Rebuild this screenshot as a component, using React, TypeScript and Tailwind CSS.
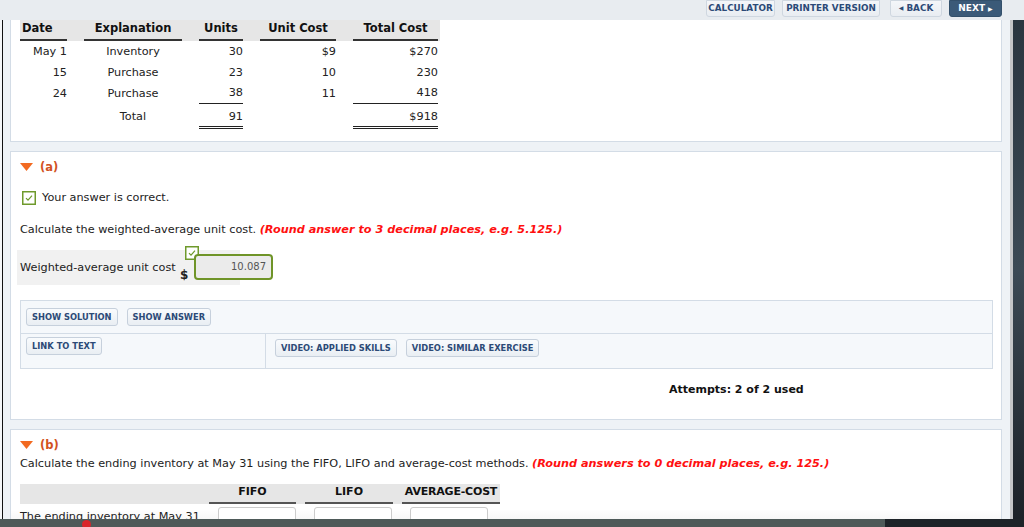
import React from "react";

const purchases = [
  { date: "May 1", explanation: "Inventory", units: "30", unitCost: "$9", totalCost: "$270" },
  { date: "15", explanation: "Purchase", units: "23", unitCost: "10", totalCost: "230" },
  { date: "24", explanation: "Purchase", units: "38", unitCost: "11", totalCost: "418" },
];

const cols = "grid grid-cols-[47px_98px_44px_76px_85px] gap-x-[17px]";
const methodCols = "grid grid-cols-[180px_87px_88px_98px] gap-x-[9px]";

const SmallButton = ({ children }: { children: React.ReactNode }) => (
  <button className="h-[18px] px-[5px] rounded-[3px] border border-[#c6d0dc] bg-gradient-to-b from-[#f9fbfd] to-[#e9eef3] text-[#2c4a77] text-[8.3px] font-bold leading-none whitespace-nowrap">
    {children}
  </button>
);

const TopButton = ({ children, dark, className = "" }: { children: React.ReactNode; dark?: boolean; className?: string }) => (
  <button
    className={
      (dark
        ? "h-[17px] rounded-b-[3px] bg-[#3b5a78] border border-[#33506b] text-white text-[9px] font-bold leading-none "
        : "h-[17px] rounded-b-[3px] bg-gradient-to-b from-[#f4f6f9] to-[#e9edf2] border border-[#cfd7e0] text-[#2c4a77] text-[8.8px] font-bold leading-none ") +
      className
    }
  >
    {children}
  </button>
);

const Triangle = () => (
  <svg width="13" height="8" viewBox="0 0 13 8">
    <polygon points="0,0 13,0 6.5,8" fill="#f26a21" />
  </svg>
);

const Check = ({ size = 14 }: { size?: number }) => (
  <svg width={size} height={size} viewBox="0 0 14 14">
    <rect x="0.75" y="0.75" width="12.5" height="12.5" fill="#fff" stroke="#6f9a2c" strokeWidth="1.5" />
    <path d="M4 7.2 L6 9.2 L10 4.6" fill="none" stroke="#6f9a2c" strokeWidth="1.2" />
  </svg>
);

export default function App() {
  return (
    <div className="w-[1024px] h-[527px] overflow-hidden bg-[#eef2f6] flex flex-col font-['DejaVu_Sans',Verdana,sans-serif] text-[11.25px] leading-[16px] text-[#222]">
      {/* top toolbar */}
      <div className="h-[20px] shrink-0 bg-[#e8ecf0] flex justify-end items-start pr-[22px]">
        <TopButton className="w-[69px]">CALCULATOR</TopButton>
        <TopButton className="w-[98px] ml-[7px]">PRINTER VERSION</TopButton>
        <TopButton className="w-[52px] ml-[10px]">
          <span className="flex items-center justify-center gap-[3px]">
            <span className="text-[6px]">◀</span>BACK
          </span>
        </TopButton>
        <TopButton dark className="w-[53px] ml-[7px]">
          <span className="flex items-center justify-center gap-[3px]">
            NEXT<span className="text-[6px]">▶</span>
          </span>
        </TopButton>
      </div>

      <div className="flex h-[499px] shrink-0">
        <div className="w-[2px] bg-[#f4f6f8]" />
        <div className="w-[1px] bg-[#111]" />

        <main className="w-[1007px] pl-[7px] pr-[8px] flex flex-col gap-[9px] overflow-hidden">
          {/* panel 1 */}
          <section className="h-[122px] shrink-0 bg-white border-x border-b border-[#d3dce6] pl-[9px]">
            <div className={`${cols} bg-[#e6e6e6] w-[420px] h-[21px] font-bold text-[11.5px] text-[#111]`}>
              <div className="border-b-2 border-[#333] pl-[2px] leading-[17px]">Date</div>
              <div className="border-b-2 border-[#333] text-center leading-[17px]">Explanation</div>
              <div className="border-b-2 border-[#333] text-center leading-[17px]">Units</div>
              <div className="border-b-2 border-[#333] text-center leading-[17px]">Unit Cost</div>
              <div className="border-b-2 border-[#333] text-center leading-[17px]">Total Cost</div>
            </div>
            {purchases.map((p, i) => (
              <div key={p.date} className={`${cols} h-[21px] items-center`}>
                <div className="text-right">{p.date}</div>
                <div className="text-center">{p.explanation}</div>
                <div className={i === 2 ? "text-right border-b border-[#222] h-[20px] leading-[18px]" : "text-right"}>{p.units}</div>
                <div className="text-right">{p.unitCost}</div>
                <div className={i === 2 ? "text-right border-b border-[#222] h-[20px] leading-[18px]" : "text-right"}>{p.totalCost}</div>
              </div>
            ))}
            <div className={`${cols} h-[26px] items-start pt-[4px]`}>
              <div />
              <div className="text-center leading-[18px]">Total</div>
              <div className="text-right border-b-[3px] border-double border-[#222] leading-[18px]">91</div>
              <div />
              <div className="text-right border-b-[3px] border-double border-[#222] leading-[18px]">$918</div>
            </div>
          </section>

          {/* panel 2 */}
          <section className="bg-white border border-[#d3dce6] h-[269px] shrink-0 pl-[9px] pr-[9px] pt-[10px]">
            <div className="flex items-center gap-[7px] h-[10px] font-bold text-[#d2521f] text-[11.5px]">
              <Triangle />
              <span>(a)</span>
            </div>
            <div className="flex items-center gap-[6px] mt-[19px] pl-[2px] h-[14px]">
              <Check />
              <span>Your answer is correct.</span>
            </div>
            <div className="mt-[17px]">
              Calculate the weighted-average unit cost.{" "}
              <span className="font-bold italic text-[#ff1010]">(Round answer to 3 decimal places, e.g. 5.125.)</span>
            </div>
            <div className="mt-[12px] -ml-[3px] w-[223px] h-[35px] bg-[#f1f1f1] flex items-center pl-[3px] relative">
              <span>Weighted-average unit cost</span>
              <span className="absolute left-[163px] top-[19px] font-bold text-[12px] leading-none">$</span>
              <div className="absolute left-[168px] top-[-4px]">
                <Check size={14} />
              </div>
              <div className="absolute left-[177px] top-[4px] w-[79px] h-[26px] border-2 border-[#6f9428] rounded-[4px] bg-[#ebebeb] flex items-center justify-end pr-[5px] text-[10px] text-[#555]">
                10.087
              </div>
            </div>

            <div className="mt-[15px] w-[973px] h-[69px] border border-[#d3dce6] bg-[#f5f8fb] flex flex-col">
              <div className="h-[33px] border-b border-[#d3dce6] flex items-center gap-[9px] pl-[5px]">
                <SmallButton>SHOW SOLUTION</SmallButton>
                <SmallButton>SHOW ANSWER</SmallButton>
              </div>
              <div className="flex flex-1">
                <div className="w-[245px] border-r border-[#d3dce6] pl-[5px] pt-[3px]">
                  <SmallButton>LINK TO TEXT</SmallButton>
                </div>
                <div className="flex gap-[9px] pl-[9px] pt-[5px]">
                  <SmallButton>VIDEO: APPLIED SKILLS</SmallButton>
                  <SmallButton>VIDEO: SIMILAR EXERCISE</SmallButton>
                </div>
              </div>
            </div>

            <div className="mt-[13px] pl-[649px] font-bold text-[11px] text-[#111]">Attempts: 2 of 2 used</div>
          </section>

          {/* panel 3 */}
          <section className="border-x border-t border-[#d3dce6] flex-1 pl-[9px] pt-[10px] bg-gradient-to-b from-white from-80% to-[#f0f0f0]">
            <div className="flex items-center gap-[7px] h-[10px] font-bold text-[#d2521f] text-[11.5px]">
              <Triangle />
              <span>(b)</span>
            </div>
            <div className="mt-[6px]">
              Calculate the ending inventory at May 31 using the FIFO, LIFO and average-cost methods.{" "}
              <span className="font-bold italic text-[#ff1010]">(Round answers to 0 decimal places, e.g. 125.)</span>
            </div>
            <div className={`${methodCols} mt-[12px] w-[480px] h-[20px] bg-[#e6e6e6] font-bold text-[11px] text-[#111]`}>
              <div />
              <div className="border-b-2 border-[#555] text-center leading-[16px]">FIFO</div>
              <div className="border-b-2 border-[#555] text-center leading-[16px]">LIFO</div>
              <div className="border-b-2 border-[#555] text-center leading-[16px] whitespace-nowrap tracking-[-0.2px]">AVERAGE-COST</div>
            </div>
            <div className={`${methodCols} pt-[3px] w-[480px]`}>
              <div className="pt-[2px] whitespace-nowrap">The ending inventory at May 31</div>
              <div className="pl-[9px]">
                <div className="h-[22px] border border-[#ccc] rounded-[3px] bg-white" />
              </div>
              <div className="pl-[9px] pr-[1px]">
                <div className="h-[22px] border border-[#ccc] rounded-[3px] bg-white" />
              </div>
              <div className="pl-[8px] pr-[12px]">
                <div className="h-[22px] border border-[#ccc] rounded-[3px] bg-white" />
              </div>
            </div>
          </section>
        </main>

        <div className="w-[3px] bg-[#c4c6c8]" />
        <div className="flex-1 bg-gradient-to-b from-[#2a3640] via-[#3c4a55] to-[#1c2228]" />
      </div>

      {/* dock */}
      <div className="h-[8px] shrink-0 flex">
        <div className="w-[885px] bg-[#4e5a59] relative">
          <div className="absolute left-[82px] top-[1px] w-[9px] h-[9px] rounded-full bg-[#d9252a]" />
        </div>
        <div className="flex-1 bg-[#1d2328]" />
      </div>
    </div>
  );
}
